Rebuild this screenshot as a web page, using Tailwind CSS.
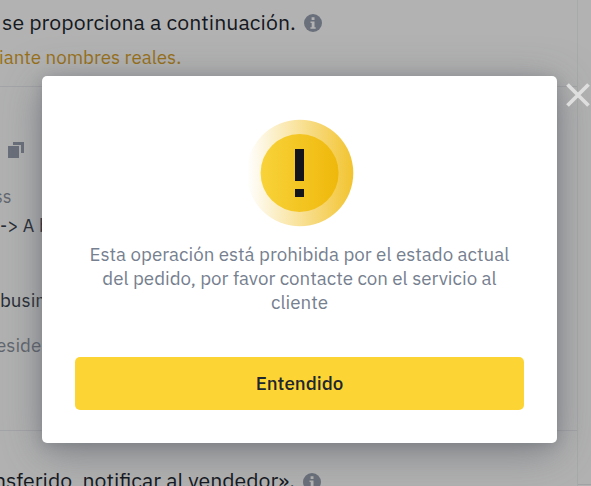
<!DOCTYPE html>
<html lang="es">
<head>
<meta charset="utf-8">
<title>Pedido</title>
<script src="https://cdn.jsdelivr.net/npm/@tailwindcss/browser@4"></script>
</head>
<body class="relative h-[486px] w-[591px] overflow-hidden bg-[#b2b2b2] font-['IBM_Plex_Sans',Roboto,sans-serif] whitespace-nowrap">
  <div class="flex h-[486px]">
    <main class="w-[578px] shrink-0 overflow-hidden border-r border-[#a8a9aa]">
      <div class="flex h-[44px] items-center pt-[2px] pl-[2px] text-[21.25px] text-[#15181e]">
        <p class="w-[302px] tracking-[0.06px]">se proporciona a continuación.</p>
        <svg class="size-[18px]" viewBox="0 0 18 18"><circle cx="9" cy="9" r="9" fill="#6a707b"/><path d="M7.6 3.3h2.9v2.8H7.6zM6.5 7.5h4v5.7h1.2v1.6H6.4v-1.6h1.3V9.1H6.5z" fill="#b2b2b2"/></svg>
      </div>
      <p class="-ml-px h-[42px] text-[18.75px] leading-[27px] text-[#987019]">iante nombres reales.</p>
      <div class="h-[345px] border-y border-[#a4a5a8]">
        <div class="h-[97px] pt-[55px] pl-2">
          <svg class="h-[17px] w-4" viewBox="0 0 16 17"><path d="M0 4h11v12H0zM5 0h11v11h-3V3H5z" fill="#6a707b"/></svg>
        </div>
        <p class="-ml-[6px] h-[30px] text-[18px] leading-[26px] text-[#62676f]">ss</p>
        <p class="h-[74px] text-[18px] leading-[24px] tracking-[0.2px] text-[#272c35]">-&gt; A binance</p>
        <p class="h-[45px] text-[18.75px] leading-[24px] text-[#272c35]">business</p>
        <p class="-ml-[4px] text-[18.75px] leading-[24px] text-[#62676f]">esidencia</p>
      </div>
      <div class="flex h-[55px] items-start pt-[35px] text-[21.25px] leading-[28px] text-[#15181e]">
        <p class="-ml-[6px] w-[309px] shrink-0">nsferido, notificar al vendedor».</p>
        <svg class="mt-[7px] size-[18px]" viewBox="0 0 18 18"><circle cx="9" cy="9" r="9" fill="#6a707b"/><path d="M7.6 3.3h2.9v2.8H7.6zM6.5 7.5h4v5.7h1.2v1.6H6.4v-1.6h1.3V9.1H6.5z" fill="#b2b2b2"/></svg>
      </div>
    </main>
    <aside class="h-[485px] grow border-b border-[#a2a3a4]"></aside>
  </div>

  <section role="dialog" class="absolute top-[76px] left-[42px] flex h-[367px] w-[515px] flex-col items-center rounded-[5px] bg-white pt-[43px] shadow-[0_9px_42px_rgba(71,77,87,0.5),0_2px_12px_rgba(71,77,87,0.22)]">
    <svg class="h-[108px] w-[108px]" viewBox="0 0 108 108">
      <defs>
        <linearGradient id="halo"><stop offset="0" stop-color="#f0b90b" stop-opacity="0"/><stop offset="1" stop-color="#f0b90b" stop-opacity=".85"/></linearGradient>
        <linearGradient id="disc"><stop offset="0" stop-color="#f8d33a"/><stop offset="1" stop-color="#efb80b"/></linearGradient>
      </defs>
      <circle cx="54" cy="54" r="53.3" fill="url(#halo)"/>
      <circle cx="53.6" cy="54" r="39" fill="url(#disc)"/>
      <path d="M49 30h9v32h-9zM49 70h9v8h-9z" fill="#14151a"/>
    </svg>
    <p class="mt-[15px] text-center text-[18.75px] leading-[24px] text-[#76808f]">Esta operación está prohibida por el estado actual<br>del pedido, por favor contacte con el servicio al<br>cliente</p>
    <button class="mt-[43px] h-[53px] w-[449px] rounded-[5px] bg-[#fcd535] text-[18.75px] font-medium text-[#202630]">Entendido</button>
  </section>
  <svg class="absolute top-[83px] left-[566px] size-6" viewBox="0 0 24 24"><path d="M1.5 1.5l21 21M22.5 1.5l-21 21" stroke="#dedede" stroke-width="3.8" fill="none"/></svg>
</body>
</html>
